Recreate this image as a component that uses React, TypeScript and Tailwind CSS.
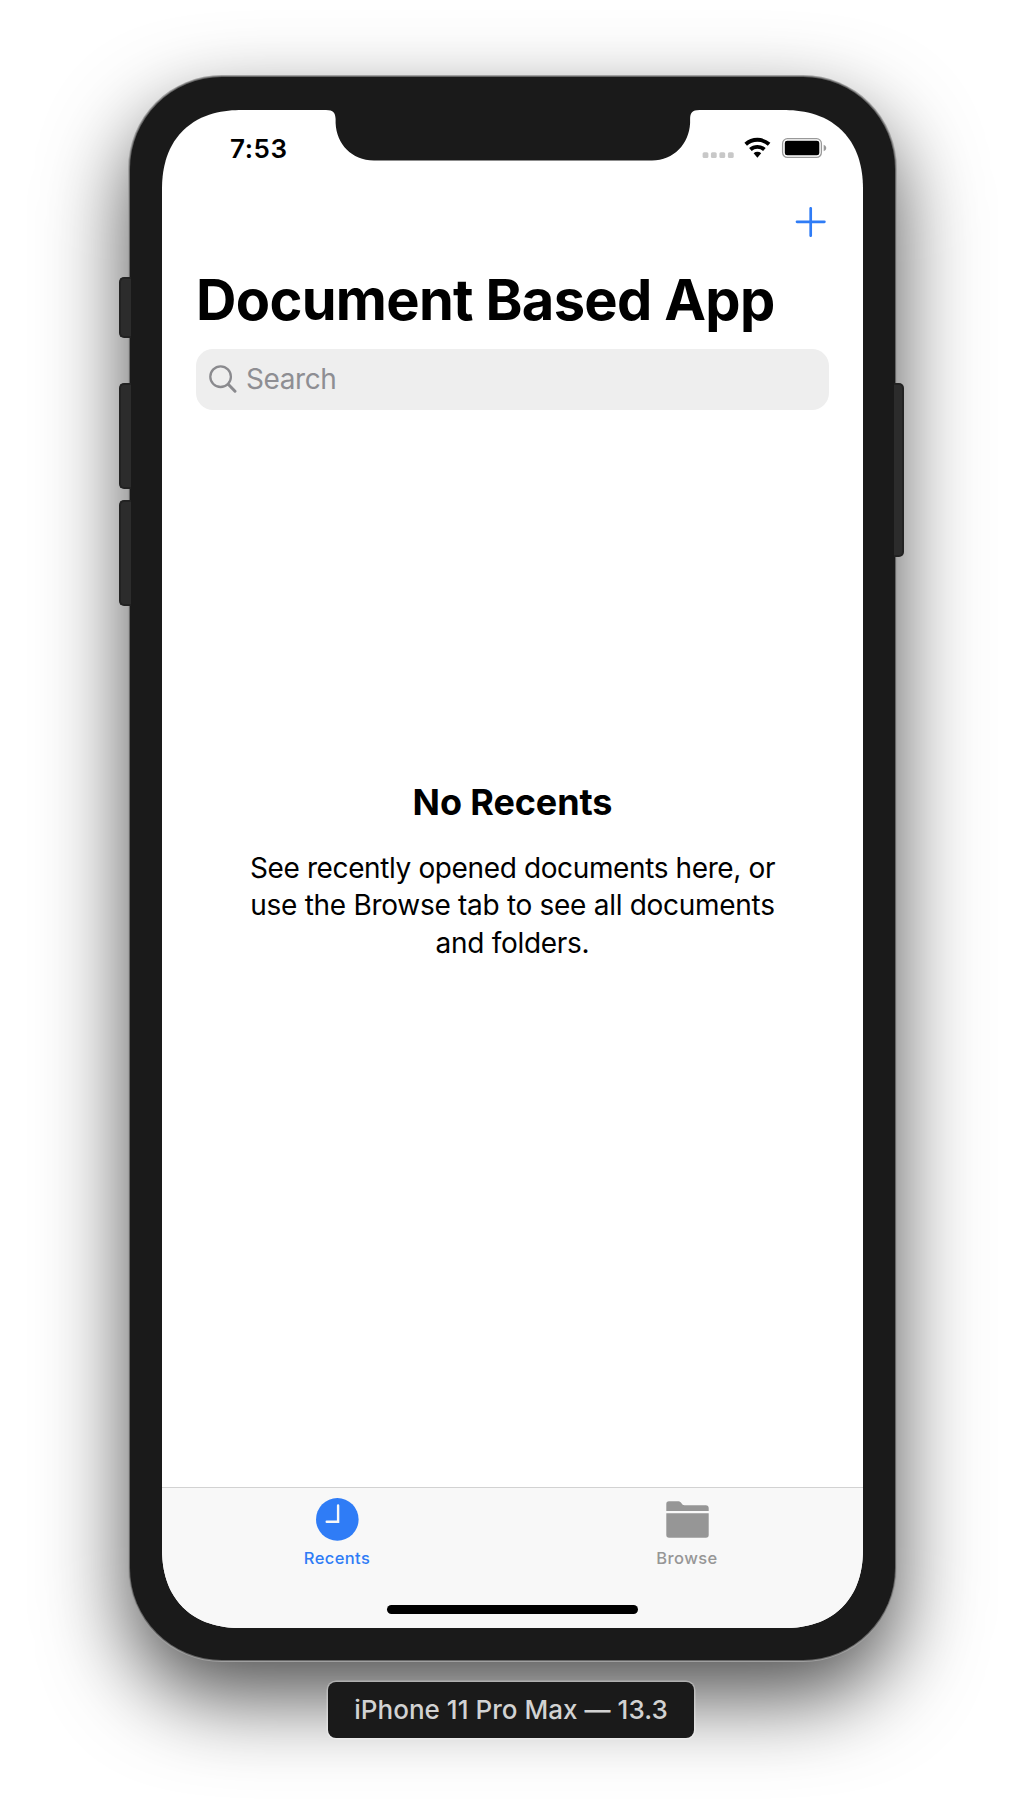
import React from "react";

function Notch() {
  return (
    <svg className="absolute left-[164px] top-0" width="374" height="51" viewBox="0 0 374 51" fill="#1a1a1a">
      <path d="M0 0H373.500C366 0 364.300 3 364.100 9V13C363 34 348 50.400 326 50.400H48C25.500 50.400 10.500 34 9.600 13V9C9.300 3 7.500 0 0 0Z" />
    </svg>
  );
}

function StatusIcons() {
  return (
    <svg className="ml-auto mr-[36px] mt-[27px]" width="125" height="22" viewBox="0 0 125 22">
      <g fill="#c8c8c8">
        <rect x="0.600" y="15.300" width="5.800" height="5.800" rx="1.500" />
        <rect x="8.900" y="15.300" width="5.800" height="5.800" rx="1.500" />
        <rect x="17.400" y="15.300" width="5.800" height="5.800" rx="1.500" />
        <rect x="25.900" y="15.300" width="5.800" height="5.800" rx="1.500" />
      </g>
      <g fill="none" stroke="#000" strokeWidth="3.900">
        <path d="M43.700 7.300A17.500 17.500 0 0 1 67.100 7.300" />
        <path d="M48.400 12.500A10.500 10.500 0 0 1 62.400 12.500" />
      </g>
      <path d="M51.600 16.300A5.600 5.600 0 0 1 59.200 16.300L55.400 20.700Z" fill="#000" />
      <rect x="80.600" y="1.700" width="38.800" height="18.700" rx="4.800" fill="none" stroke="#999" strokeWidth="1.300" />
      <rect x="82.800" y="3.700" width="34.500" height="14.600" rx="2.400" fill="#000" />
      <path d="M121.700 7.700Q124.300 8.700 124.300 11T121.700 14.300Z" fill="#999" />
    </svg>
  );
}

function ClockIcon() {
  return (
    <svg width="43" height="43" viewBox="0 0 43 43">
      <circle cx="21.300" cy="21.400" r="21.300" fill="#2f7cf6" />
      <path d="M22.100 7.400V23.700H10.700" fill="none" stroke="#f8f8f8" strokeWidth="2.400" strokeLinecap="round" />
    </svg>
  );
}

function FolderIcon() {
  return (
    <svg width="43" height="43" viewBox="0 0 43 43" fill="#969696">
      <path d="M0.300 13V6Q0.300 3.300 3 3.300H12.500C15.500 3.300 15.500 7.300 18.500 7.300H39.700Q42.700 7.300 42.700 10.300V13Z" />
      <path d="M0.300 15.200H42.700V37Q42.700 39.800 39.900 39.800H3.100Q0.300 39.800 0.300 37Z" />
    </svg>
  );
}

function Tab({ label, color, children }: { label: string; color: string; children: React.ReactNode }) {
  return (
    <div className={"flex flex-1 flex-col items-center " + color}>
      {children}
      <span className="mt-[6px] text-[16.5px] font-medium leading-[22px] tracking-[0.4px]">{label}</span>
    </div>
  );
}

export default function App() {
  return (
    <div className="flex h-[1810px] w-[1024px] flex-col overflow-hidden bg-white pt-[77px] font-['Inter',sans-serif] text-black">
      <div className="relative ml-[130px] h-[1583px] w-[765px] shrink-0 rounded-[92px] bg-[#1a1a1a] px-[32px] py-[33px] shadow-[0_0_0_1px_#666,0_0_0_2px_#a0a0a0,0_36px_86px_rgba(0,0,0,0.7)]">
        <div className="absolute -left-[11px] top-[200px] h-[61px] w-[12px] rounded-l-[5px] border-2 border-r-0 border-[#222] bg-[#2c2c2c]" />
        <div className="absolute -left-[11px] top-[306px] h-[106px] w-[12px] rounded-l-[5px] border-2 border-r-0 border-[#222] bg-[#2c2c2c]" />
        <div className="absolute -left-[11px] top-[423px] h-[106px] w-[12px] rounded-l-[5px] border-2 border-r-0 border-[#222] bg-[#2c2c2c]" />
        <div className="absolute -right-[9px] top-[306px] h-[174px] w-[10px] rounded-r-[5px] border-2 border-l-0 border-[#222] bg-[#2c2c2c]" />

        <div className="relative flex h-[1518px] w-[701px] flex-col overflow-hidden rounded-[80px] bg-white [corner-shape:superellipse(1.2)]">
          <Notch />
          <div className="flex h-[60px] shrink-0">
            <span className="ml-[68px] mt-[23px] text-[26px] font-semibold leading-[32px] tracking-[0.6px]">7:53</span>
            <StatusIcons />
          </div>
          <div className="flex h-[98px] shrink-0 justify-end pr-[37px] pt-[37px]">
            <svg width="31" height="30" viewBox="0 0 31 30" fill="none" stroke="#2f7cf6" strokeWidth="2.700" strokeLinecap="round">
              <path d="M15.700 1.300V28.700M2 14.800H29.400" />
            </svg>
          </div>
          <h1 className="ml-[34px] whitespace-nowrap text-[56px] font-bold leading-[64px] tracking-[-0.69px]">Document Based App</h1>
          <div className="mx-[34px] mt-[17px] flex h-[61px] shrink-0 items-center rounded-[17px] bg-[#eeeeee] pb-[1px] pl-[13px] text-[#8e8e93]">
            <svg className="mt-[1px]" width="28" height="30" viewBox="0 0 28 30" fill="none" stroke="#8a8a8e">
              <circle cx="11.600" cy="11.700" r="10.300" strokeWidth="2.300" />
              <path d="M19.200 19.300L26 26.200" strokeWidth="3" strokeLinecap="round" />
            </svg>
            <span className="ml-[9px] text-[28px] leading-[36px] tracking-[-0.4px]">Search</span>
          </div>
          <h2 className="mt-[370px] text-center text-[36px] font-bold leading-[44px] tracking-[-0.1px]">No Recents</h2>
          <p className="mt-[26px] whitespace-nowrap text-center text-[28px] leading-[37.3px]">
            <span className="block tracking-[-0.38px]">See recently opened documents here, or</span>
            <span className="block tracking-[-0.29px]">use the Browse tab to see all documents</span>
            <span className="block tracking-[-0.29px]">and folders.</span>
          </p>
          <div className="mt-auto h-[141px] shrink-0 border-t border-[#d2d2d2] bg-[#f8f8f8] pt-[10px]">
            <div className="flex pr-[1px]">
              <Tab label="Recents" color="text-[#2f7cf6]">
                <ClockIcon />
              </Tab>
              <Tab label="Browse" color="text-[#969696]">
                <FolderIcon />
              </Tab>
            </div>
            <div className="mx-auto mt-[36px] h-[9px] w-[251px] rounded-full bg-black" />
          </div>
        </div>
      </div>

      <div className="relative ml-[328px] mt-[22px] flex h-[56px] w-[366px] shrink-0 items-center justify-center rounded-[8px] bg-[#1a1a1a] pb-[2px] text-[26px] font-medium text-[#d2d2d2] shadow-[0_0_0_1.5px_rgba(255,255,255,0.3)]">
        <span className="whitespace-nowrap tracking-[0.04px]">iPhone 11 Pro Max — 13.3</span>
      </div>
    </div>
  );
}
